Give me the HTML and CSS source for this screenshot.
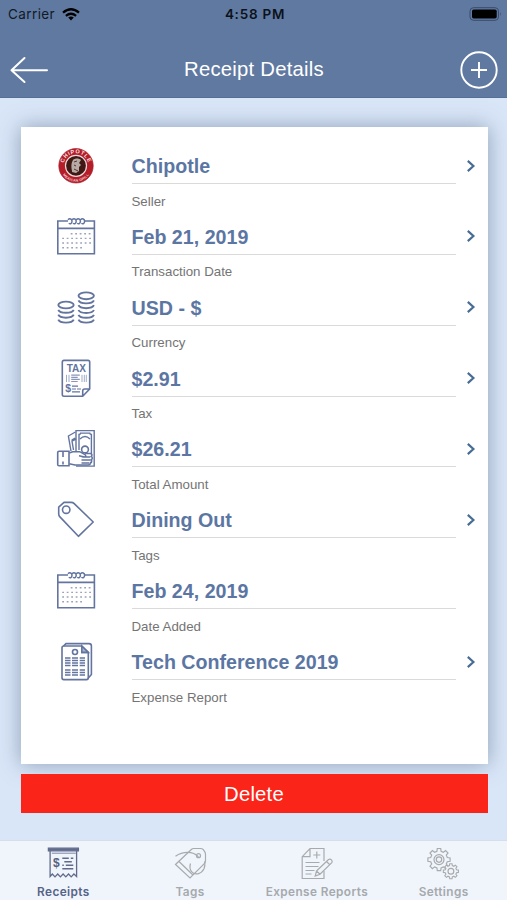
FILE: index.html
```html
<!DOCTYPE html>
<html lang="en">
<head>
<meta charset="utf-8">
<title>Receipt Details</title>
<link rel="stylesheet" href="styles.css">
</head>
<body>
<svg class="defs" width="0" height="0" aria-hidden="true">
  <symbol id="calendar" viewBox="0 0 42 42">
    <path d="M13 5H2.8v32.8h36.6V5H30M2.8 12.4h36.6"/>
    <path d="M13 3.8c1.600-1.800 4-.8 4 1.500s-1.800 3.200-3.200 2M17.200 3.800c1.600-1.800 4-.8 4 1.500s-1.800 3.200-3.200 2M21.400 3.800c1.600-1.800 4-.8 4 1.500s-1.800 3.200-3.200 2M25.600 3.800c1.600-1.800 4-.8 4 1.500s-1.800 3.200-3.200 2" stroke-width="1.500"/>
    <path class="dots" d="M15.700 17.800h20M7.200 22.400h29M7.200 27h29M7.200 31.800h21"/>
  </symbol>
  <symbol id="chevron" viewBox="0 0 10 14"><path d="M1.800 1.900 7.400 7l-5.600 5.100"/></symbol>
</svg>

<header class="top">
  <div class="status">
    <div class="carrier">Carrier
      <svg width="18" height="13" viewBox="0 0 18 13" fill="none" stroke="#000" stroke-width="2.200"><path d="M1 4.700Q9-2.200 17 4.700M3.900 7.900Q9 3.600 14.100 7.900"/><path d="M6.200 9.600Q9 7.200 11.800 9.600L9 12.600z" fill="#000" stroke="none"/></svg>
    </div>
    <div class="time">4:58 PM</div>
    <div class="battery"><svg width="33" height="14" viewBox="0 0 33 14"><rect x="1" y=".7" width="28.500" height="12.600" rx="3.500" fill="none" stroke="#394b69"/><rect x="3" y="2.500" width="24.700" height="9" rx="1.700"/><path d="M31 5v4q1.500-2 0-4" fill="#394b69"/></svg></div>
  </div>
  <nav class="nav">
    <svg width="38" height="28" viewBox="0 0 38 28" fill="none" stroke="#fff" stroke-width="2" stroke-linecap="round" stroke-linejoin="round"><path d="M14.500 2 1.500 14.300l13 11.700M1.500 14.300H37"/></svg>
    <h1>Receipt Details</h1>
    <svg width="38" height="38" viewBox="0 0 38 38" fill="none" stroke="#fff" stroke-width="1.900"><circle cx="19" cy="19" r="17.700"/><path d="M11 19h16M19 11v16"/></svg>
  </nav>
</header>

<main>
  <section class="card">
    <div class="row">
      <svg class="icon" viewBox="0 0 42 42">
        <defs><path id="arc-top" d="M8.500 20.800a12.500 12.500 0 0 1 25 0"/><path id="arc-bottom" d="M5.100 20.800a15.900 15.900 0 0 0 31.800 0"/></defs>
        <circle cx="21" cy="20.800" r="17.200" fill="#b51d29" stroke="#a91c28" stroke-width=".7"/>
        <circle cx="21" cy="20.800" r="10.500" fill="#411814" stroke="#e9dcda" stroke-width="1.200"/>
        <path d="M17 26c-1-4-1-8 1-11 2-2 6-2 8 0l-2 3 2 2-2 2v4l-3 2-4-1z" fill="#b7aaa4" stroke="none"/>
        <path d="M19 17l3-1M19 20l2 1M19 24l4 2" stroke="#56332d" stroke-width="1"/>
        <text class="logo-name"><textPath href="#arc-top" startOffset="50%">CHIPOTLE</textPath></text>
        <text class="logo-sub"><textPath href="#arc-bottom" startOffset="50%">MEXICAN GRILL</textPath></text>
      </svg>
      <div class="value">Chipotle</div><svg class="chevron"><use href="#chevron"/></svg>
      <div class="label">Seller</div>
    </div>
    <div class="row">
      <svg class="icon"><use href="#calendar"/></svg>
      <div class="value">Feb 21, 2019</div><svg class="chevron"><use href="#chevron"/></svg>
      <div class="label">Transaction Date</div>
    </div>
    <div class="row">
      <svg class="icon" viewBox="0 0 42 42" stroke-width="1.800">
        <g class="coins"><ellipse cx="11" cy="18" rx="7.700" ry="3.400"/><ellipse cx="31.200" cy="8.800" rx="7.700" ry="3.400"/>
        <path d="M3.300 22.800c1.600 4 13.800 4 15.400 0M3.300 27.700c1.600 4 13.800 4 15.400 0M3.300 32.600c1.600 4 13.800 4 15.400 0M23.500 13.400c1.600 4 13.800 4 15.400 0M23.500 18.200c1.600 4 13.800 4 15.400 0M23.500 23c1.600 4 13.800 4 15.400 0M23.500 27.800c1.600 4 13.800 4 15.400 0M23.500 32.600c1.600 4 13.800 4 15.400 0"/></g>
      </svg>
      <div class="value">USD - $</div><svg class="chevron"><use href="#chevron"/></svg>
      <div class="label">Currency</div>
    </div>
    <div class="row">
      <svg class="icon" viewBox="0 0 42 42">
        <path d="M9 2.400h24q1.700 0 1.700 1.700V31l-7 7.200H9q-1.700 0-1.700-1.700V4.100Q7.300 2.400 9 2.400zM27.700 38.200V33q0-2 2-2h5"/>
        <text class="tax-text" x="21.300" y="14">TAX</text>
        <path d="M11.500 16.800v7.200M14 16.800v7.200M27 16.800v7.200M29.300 16.800v7.200M31.300 16.800v7.200" stroke-width=".8" opacity=".75"/>
        <path d="M16.200 17.200h8.600M16.200 19.300h6.500M16.200 21.400h8.600M16.200 23.500h6.500" stroke-width="1.200" opacity=".75"/>
        <text class="dollar-text" x="13.200" y="34">$</text>
        <path d="M17 28.200h6M17 31h4M22 31h4M17 33.800h8" stroke-width="1.200"/>
      </svg>
      <div class="value">$2.91</div><svg class="chevron"><use href="#chevron"/></svg>
      <div class="label">Tax</div>
    </div>
    <div class="row">
      <svg class="icon" viewBox="0 0 42 42">
        <path d="M21 24V2.600h18.200v35.500H21M24 22V6.500q1.700 0 1.700-1.400h9q0 1.400 1.700 1.400v28q-1.700 0-1.700 1.200h-9" stroke-width="1.400"/>
        <path d="M25 11q5-5 10 0M16 23 13.400 8l7-4M16.700 12l3.500-2M18.500 22 17 13l4-2" stroke-width="1.400"/>
        <circle cx="30" cy="21.500" r="3.400"/>
        <path d="M4 23.300h10v14.500H4q-1.300 0-1.300-1.300v-12q0-1.200 1.300-1.200zM8 24v5M8 33.500v3"/>
        <path d="M14.200 25l3.500-1.300h7l5.300 3q2 1.700-.7 2.200L24 27.700M30 25.500h5.300q2.600.5 1 3 2 1.500 0 3.300 1 2-1 2.900 0 2.200-2.200 2.400H20l-5.800-1.300M26.500 29h8.800M26.500 32h9M26.500 35h7.500" fill="#fff" stroke-width="1.500"/>
      </svg>
      <div class="value">$26.21</div><svg class="chevron"><use href="#chevron"/></svg>
      <div class="label">Total Amount</div>
    </div>
    <div class="row">
      <svg class="icon" viewBox="0 0 42 42"><path d="M9 3.400h7q2 0 3.200 1.200L38.200 23 23.400 37.300 4.700 17.600q-1-1-1-3V8.200z" stroke-linejoin="round"/><circle cx="11.200" cy="10.700" r="3.700"/></svg>
      <div class="value">Dining Out</div><svg class="chevron"><use href="#chevron"/></svg>
      <div class="label">Tags</div>
    </div>
    <div class="row">
      <svg class="icon"><use href="#calendar"/></svg>
      <div class="value">Feb 24, 2019</div>
      <div class="label">Date Added</div>
    </div>
    <div class="row">
      <svg class="icon" viewBox="0 0 42 42">
        <path d="M8.800 5h18l6.500 6.400v25.400q0 1.800-1.800 1.800H8.800Q7 38.600 7 36.800V6.800Q7 5 8.800 5zM26.800 5v6.400h6.500"/>
        <path d="M8.500 5l2.500-2.400h23q2.400 0 2.400 2.400v28.500l-3.500 4"/>
        <path d="M26.800 5l6.500 6.400h-6.500z" fill="#a9b4d0"/>
        <circle cx="20" cy="11" r="2.500"/>
        <path d="M10 17h5.500M17 17h6M24.700 17H30M10 19.500h5.500M17 19.500h6M24.700 19.500H30M10 22h5.500M17 22h6M24.700 22H30M10 24.500h5.500M17 24.500h6M24.700 24.500H30M10 29h5.500M17 29h6M24.700 29H30M10 31.500h5.500M17 31.500h6M24.700 31.500H30M10 34h5.500M17 34h6M24.700 34H30" stroke-width="1.400"/>
      </svg>
      <div class="value">Tech Conference 2019</div><svg class="chevron"><use href="#chevron"/></svg>
      <div class="label">Expense Report</div>
    </div>
  </section>
  <button class="delete">Delete</button>
</main>

<footer class="tabs">
  <div class="tab active">
    <svg viewBox="-.8 0 34 34"><path d="M1.600 2.200h30v2.600h-30z" fill="#606b8c"/><path d="M3.300 4.500v26l2.200-2.500 2.700 2.900 2.700-2.900 2.700 2.900 2.700-2.900 2.700 2.900 2.700-2.900 2.700 2.900 2.700-2.900 2.700 2.500v-26"/><path d="M5 7.200h24" stroke-width=".8"/><path d="M15.500 12.200H22M24 12.200h2.500M17.500 15.700H25M15.500 19.200h1.500M19 19.200h7.500M15.500 22.700H26.500" stroke-width="1.400"/><text x="9.500" y="21">$</text></svg>
    <span>Receipts</span>
  </div>
  <div class="tab">
    <svg viewBox="-.5 0 34 34"><path d="M2 18.500 17.800 3.500q1-1 2.500-1h6.500q2 0 3 1.200l1.500 2.200q.7 1 .7 2.500v6q0 2-1.200 3.200L16.500 32zM5.500 15.500l14 13.500"/><path d="M25 10.800C19 4.500 9 5.500 2 10.200M17 17.500q-1.500 5 1 8 2 3 6.500 2.300 4-1 6-5 1.300-3 .7-7.500"/><circle cx="25" cy="9.700" r="2"/></svg>
    <span>Tags</span>
  </div>
  <div class="tab">
    <svg viewBox="1.500 0 34 34"><path d="M25.500 15V2.500H11.500L3.700 10.700V32.500h21.800V25M11.500 2.500v8.200H3.700M18.300 5.500v7M14.800 9h7M7 16.500h14M7 20.500h13M7 24.500h9M7 28h6"/><path d="M18 25 30 13.500q1.800-1 3 .3 1.300 1.300.3 2.800L21.500 28.200 16.700 30zM18 25l3.500 3.200M28 15.500l3.300 3.200"/></svg>
    <span>Expense Reports</span>
  </div>
  <div class="tab">
    <svg viewBox="1.500 0 34 34">
      <path id="gear" d="M11.400 5.300 11.800 2.500h3.400l.4 2.800 2.300 1 2.200-1.700 2.400 2.400-1.700 2.200 1 2.300 2.800.4v3.400l-2.800.4-1 2.300 1.700 2.200-2.400 2.400-2.200-1.700-2.300 1-.4 2.800h-3.400l-.4-2.800-2.300-1-2.200 1.700-2.400-2.400 1.700-2.200-1-2.300-2.800-.4v-3.400l2.800-.4 1-2.300L4.500 7 6.900 4.600l2.200 1.700z"/>
      <circle cx="13.500" cy="13.600" r="5"/><circle cx="13.500" cy="13.600" r="2.700"/>
      <g class="small-gear"><use href="#gear" transform="translate(16.200 16) scale(.68)"/></g>
      <circle cx="25.400" cy="25.300" r="2.900"/>
    </svg>
    <span>Settings</span>
  </div>
</footer>
</body>
</html>
```
FILE: styles.css
```css
* { box-sizing: border-box; }
body {
  margin: 0;
  height: 900px;
  display: flex;
  flex-direction: column;
  overflow: hidden;
  background: #d9e6f8;
  font-family: "Liberation Sans", Arial, sans-serif;
}
.defs { position: absolute; }
svg { display: block; overflow: visible; }
.top { height: 98px; background: #6079a0; border-bottom: 1px solid #566f96; }
.status {
  height: 28px;
  display: grid;
  grid-template-columns: 1fr auto 1fr;
  align-items: center;
  padding: 0 5px 0 8px;
  font: 13.5px Inter, sans-serif;
  color: #111a27;
}
.carrier { display: flex; align-items: center; gap: 7px; letter-spacing: .4px; }
.time { font-weight: 600; letter-spacing: .75px; color: #0c121c; }
.battery { justify-self: end; margin-top: -1px; }
.nav { display: flex; align-items: center; justify-content: space-between; height: 84px; padding: 0 9px 0 10px; }
.nav h1 { margin: 0; font-size: 20.3px; font-weight: 400; letter-spacing: .24px; color: #fff; line-height: 24px; padding-bottom: 3px; }
main { flex: 1; padding: 29px 19.5px 0 20.5px; }
.card { height: 637px; padding-top: 18px; background: #fff; box-shadow: 0 0 20px rgba(70, 90, 120, .5); }
.row {
  display: grid;
  grid-template-columns: 42px 324px 10px;
  grid-template-rows: 39px 31.86px;
  padding-left: 34.5px;
}
.icon { grid-row: 1 / 3; width: 42px; height: 42px; fill: none; stroke: #63749f; stroke-width: 1.6; }
.coins { stroke-width: 1.9; }
.dots { stroke: #9aa3bb; stroke-width: 1.4; stroke-dasharray: 1.8 2.7; }
.value { grid-column: 2; margin-left: 34.5px; width: 324.5px; padding-top: 9px; line-height: 24px; border-bottom: 1px solid #dadada; font-size: 19.65px; font-weight: 700; color: #5c76a3; white-space: nowrap; }
.chevron { grid-column: 3; width: 10px; height: 14px; margin: 13.5px 0 0 44.5px; fill: none; stroke: #486d94; stroke-width: 2.2; }
.label { grid-column: 2; grid-row: 2; margin-left: 34.5px; padding-top: 9.6px; font-size: 13.3px; line-height: 16px; color: #747474; }
.icon text { fill: #63749f; stroke: none; text-anchor: middle; font-weight: 700; }
.icon .tax-text { font-size: 10px; }
.icon .dollar-text { font-size: 10.5px; }
.icon .logo-name { font-size: 5.5px; fill: #f7e5e5; letter-spacing: .7px; }
.icon .logo-sub { font-size: 3.6px; fill: #f0cfd1; letter-spacing: .2px; }
.delete { display: block; width: 100%; height: 39px; margin-top: 10px; padding: 2px 0 0; border: 0; background: #fb2419; color: #fff; font: 20.3px "Liberation Sans", Arial, sans-serif; letter-spacing: .2px; position: relative; }
.tabs { height: 60px; display: grid; grid-template-columns: repeat(4, 1fr); background: #f0f5fb; border-top: 1px solid #d5dfeb; }
.tab { display: flex; flex-direction: column; align-items: center; padding-top: 5px; color: #a6a9ad; }
.tab svg { width: 34px; height: 34px; fill: none; stroke: #a8abae; stroke-width: 1.2; }
.tab span { margin-top: 4px; font: 600 11.8px/16px Inter, sans-serif; letter-spacing: .4px; white-space: nowrap; }
.tab.active { color: #556488; }
.tab.active svg { stroke: #606b8c; stroke-width: 1.3; }
.tab text { fill: #56617f; stroke: none; font: 700 12px "Liberation Sans", sans-serif; text-anchor: middle; }
.small-gear use { fill: #f0f5fb; stroke-width: 1.6; }
```
